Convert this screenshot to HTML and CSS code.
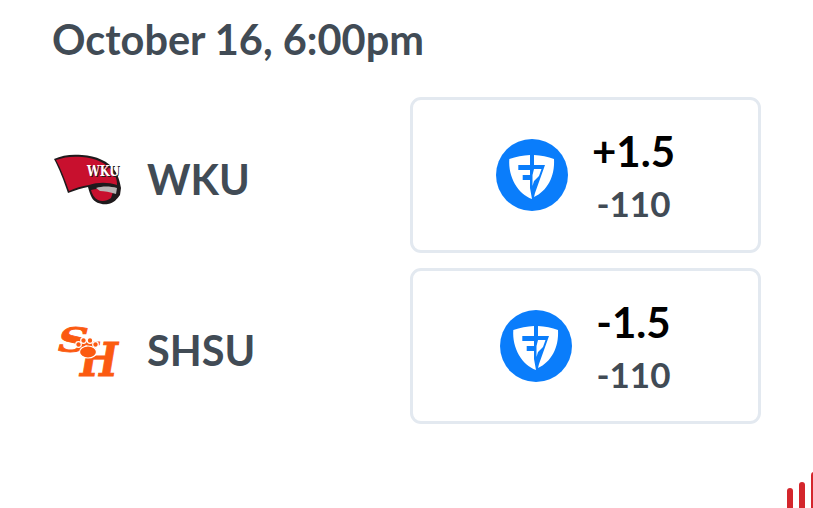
FILE: index.html
```html
<!DOCTYPE html>
<html lang="en">
<head>
<meta charset="utf-8">
<title>WKU vs SHSU</title>
<link rel="stylesheet" href="styles.css">
</head>
<body>
<main class="game">
  <h1 class="date">October 16, 6:00pm</h1>
  <div class="rows">
    <div class="row">
      <div class="team">
        <svg class="logo" viewBox="0 0 72 60" width="72" height="60" aria-hidden="true">
          <path d="M2 14 C10 10 20 9 30 10 C44 11 57 16 63 26 C67 32 68 38 69 43 L68 50 C65 54 62 58 56 59 C50 60 43 58 40 53 C38 49 37 46 36 42 C30 43 24 45 16 48 C12 36 7 23 2 14 Z" fill="#1f1a1c"/>
          <path d="M4 15 C12 12 21 11 30 12 C43 13 55 18 61 27 C65 33 65 37 65 40 C56 37 46 37 37 40 C30 41 23 43 17 46 C13 35 9 24 4 15 Z" fill="#c8102e"/>
          <path d="M39 45 C47 43 56 43 62 44 L59 53 C55 56 50 57 46 55 C42 53 40 49 39 45 Z" fill="#c8102e"/>
          <path d="M44 43 C50 41 58 41 65 43 L64 49 C58 47 52 46 48 46 Z" fill="#b9b4b4"/>
          <text class="wku-shadow" x="36" y="32" textLength="32" lengthAdjust="spacingAndGlyphs">WKU</text>
          <text class="wku" x="35" y="31" textLength="32" lengthAdjust="spacingAndGlyphs">WKU</text>
        </svg>
        <span class="name">WKU</span>
      </div>
      <button class="odds" type="button">
        <svg class="book" viewBox="0 0 72 72" width="72" height="72" aria-hidden="true">
          <circle cx="36" cy="36" r="36" fill="#0a7dfb"/>
          <path d="M34 16 L34 26 L22.300 26 L22.300 31 L34 31 L34 36 L26.700 36 L26.700 41 L34 41 L34 49 L36 60 C22 55 12 38 13.300 20 C20 17.500 27 16.500 34 16 Z" fill="#fff"/>
          <path d="M38 16 C45 16.500 52 17.500 58 20 C59 38 51 52 38 58 L39 54 L49 26 L38 26 Z" fill="#fff"/>
          <path d="M38 30 L45.500 30 L43 37 L38 42 L36.500 47 L36.500 36 Z" fill="#fff"/>
        </svg>
        <span class="line"><b class="spread">+1.5</b><span class="price">-110</span></span>
      </button>
    </div>
    <div class="row">
      <div class="team">
        <svg class="logo" viewBox="0 0 72 60" width="72" height="60" aria-hidden="true">
          <text class="sh sh-s" x="6" y="36" textLength="31" lengthAdjust="spacingAndGlyphs">S</text>
          <text class="sh sh-h" x="28" y="60" textLength="38" lengthAdjust="spacingAndGlyphs">H</text>
          <g class="paw">
            <ellipse cx="36" cy="36" rx="8.500" ry="6"/>
            <circle cx="26.500" cy="28.500" r="2.800"/>
            <circle cx="31.500" cy="24.500" r="2.800"/>
            <circle cx="38" cy="24.500" r="2.800"/>
            <circle cx="43.500" cy="28.500" r="2.800"/>
          </g>
        </svg>
        <span class="name">SHSU</span>
      </div>
      <button class="odds" type="button">
        <svg class="book" viewBox="0 0 72 72" width="72" height="72" aria-hidden="true">
          <circle cx="36" cy="36" r="36" fill="#0a7dfb"/>
          <path d="M34 16 L34 26 L22.300 26 L22.300 31 L34 31 L34 36 L26.700 36 L26.700 41 L34 41 L34 49 L36 60 C22 55 12 38 13.300 20 C20 17.500 27 16.500 34 16 Z" fill="#fff"/>
          <path d="M38 16 C45 16.500 52 17.500 58 20 C59 38 51 52 38 58 L39 54 L49 26 L38 26 Z" fill="#fff"/>
          <path d="M38 30 L45.500 30 L43 37 L38 42 L36.500 47 L36.500 36 Z" fill="#fff"/>
        </svg>
        <span class="line"><b class="spread">-1.5</b><span class="price">-110</span></span>
      </button>
    </div>
  </div>
</main>
<div class="signal" aria-hidden="true"><i class="bar bar-1"></i><i class="bar bar-2"></i><i class="bar bar-3"></i></div>
</body>
</html>
```
FILE: styles.css
```css
* { box-sizing: border-box; }
html, body { margin: 0; height: 100%; }
body {
  position: relative;
  width: 813px;
  height: 508px;
  overflow: hidden;
  background: #fff;
  font-family: Lato, "Open Sans", sans-serif;
  color: #414b55;
}
.game { padding: 16px 52px 0 52px; }
.date {
  margin: 0 0 35px;
  font-size: 41.500px;
  line-height: 46px;
  font-weight: 700;
}
.rows { display: flex; flex-direction: column; gap: 15px; }
.row {
  display: flex;
  align-items: center;
  justify-content: space-between;
  height: 156px;
}
.team { display: flex; align-items: center; gap: 23px; }
.logo { display: block; flex: none; overflow: visible; }
.name { font-size: 41.500px; font-weight: 700; line-height: 50px; padding-top: 8px; }
.odds {
  display: flex;
  align-items: center;
  justify-content: center;
  gap: 24px;
  width: 351px;
  height: 156px;
  padding: 0;
  background: #fff;
  border: 3px solid #e3e9f0;
  border-radius: 11px;
  font: inherit;
  color: inherit;
}
.book { display: block; flex: none; }
.line { display: flex; flex-direction: column; align-items: center; }
.spread { font-size: 42px; line-height: 50px; font-weight: 700; color: #000; padding-top: 2px; }
.price { font-size: 35px; line-height: 46px; margin-top: 4px; font-weight: 700; }
.wku, .wku-shadow {
  font-family: "DejaVu Serif", serif;
  font-size: 14px;
  font-weight: 700;
}
.wku { fill: #fff; }
.wku-shadow { fill: #1f1a1c; }
.sh {
  font-family: "DejaVu Serif", serif;
  font-weight: 700;
  font-style: italic;
  fill: #fb5a10;
  stroke: #fb5a10;
  stroke-width: 0.8;
}
.sh-s { font-size: 34px; }
.sh-h { font-size: 46px; }
.paw { fill: #fb5a10; stroke: #fff; stroke-width: 1.2; }
.signal {
  position: absolute;
  right: 0;
  bottom: 0;
  display: flex;
  align-items: flex-end;
  gap: 6px;
  width: 26px;
  height: 36px;
  overflow: hidden;
}
.bar { display: block; flex: none; width: 6px; border-radius: 3px 3px 0 0; background: #d4262c; }
.bar-1 { height: 20px; }
.bar-2 { height: 26px; }
.bar-3 { height: 36px; }
```
